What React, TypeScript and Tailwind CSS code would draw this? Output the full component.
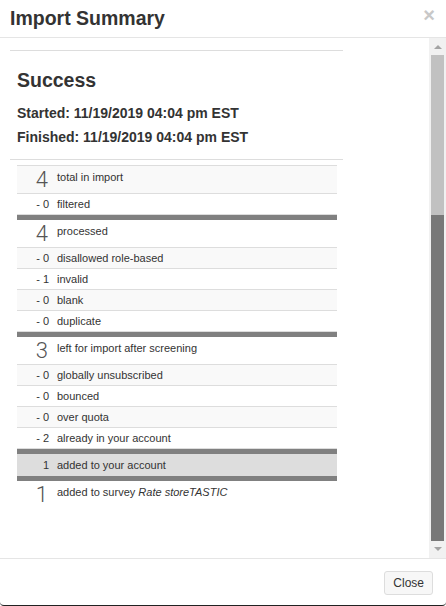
import React from 'react';

type Row =
  | { kind: 'big'; n: string; label: React.ReactNode; bg?: string; last?: boolean }
  | { kind: 'small'; n: string; label: string; bg?: string; last?: boolean }
  | { kind: 'sep' };

const rows: Row[] = [
  { kind: 'big', n: '4', label: 'total in import', bg: 'bg-[#f9f9f9]' },
  { kind: 'small', n: '- 0', label: 'filtered' },
  { kind: 'sep' },
  { kind: 'big', n: '4', label: 'processed' },
  { kind: 'small', n: '- 0', label: 'disallowed role-based', bg: 'bg-[#f9f9f9]' },
  { kind: 'small', n: '- 1', label: 'invalid' },
  { kind: 'small', n: '- 0', label: 'blank', bg: 'bg-[#f9f9f9]' },
  { kind: 'small', n: '- 0', label: 'duplicate' },
  { kind: 'sep' },
  { kind: 'big', n: '3', label: 'left for import after screening' },
  { kind: 'small', n: '- 0', label: 'globally unsubscribed', bg: 'bg-[#f9f9f9]' },
  { kind: 'small', n: '- 0', label: 'bounced' },
  { kind: 'small', n: '- 0', label: 'over quota', bg: 'bg-[#f9f9f9]' },
  { kind: 'small', n: '- 2', label: 'already in your account' },
  { kind: 'sep' },
  { kind: 'small', n: '1', label: 'added to your account', bg: 'bg-[#dddddd]', last: true },
  { kind: 'sep' },
  {
    kind: 'big',
    n: '1',
    last: true,
    label: (
      <>
        added to survey <i>Rate storeTASTIC</i>
      </>
    ),
  },
];

function SummaryRow({ row }: { row: Row }) {
  if (row.kind === 'sep') {
    return <div className="h-[5px] bg-[#808080]" />;
  }
  if (row.kind === 'big') {
    return (
      <div
        className={`flex items-start h-[28px] ${row.last ? '' : 'border-b border-[#dddddd]'} ${row.bg ?? ''}`}
      >
        <div className="w-[32px] pr-[1px] text-right text-[22px] leading-[27px] font-light text-[#555] font-['Roboto',sans-serif]">
          {row.n}
        </div>
        <div className="pl-[8px] pt-[5px] text-[11px] leading-[13px] text-[#333]">{row.label}</div>
      </div>
    );
  }
  return (
    <div
      className={`flex items-center ${row.last ? 'h-[22px]' : 'h-[21px] border-b border-[#dddddd]'} ${row.bg ?? ''}`}
    >
      <div className="w-[32px] text-right text-[11px] leading-[13px] text-[#333] whitespace-pre">{row.n}</div>
      <div className="pl-[8px] text-[11px] leading-[13px] text-[#333]">{row.label}</div>
    </div>
  );
}

function Scrollbar() {
  return (
    <div className="w-[17px] bg-[#f1f1f1] flex flex-col">
      <div className="h-[17px] flex items-center justify-center">
        <svg width="8" height="5" viewBox="0 0 8 5">
          <path d="M0 5 L4 1 L8 5 Z" fill="#a3a3a3" />
        </svg>
      </div>
      <div className="flex-1 flex flex-col px-[2px]">
        <div className="h-[160px] bg-[#c1c1c1]" />
        <div className="flex-1 bg-[#787878]" />
      </div>
      <div className="h-[17px] flex items-center justify-center">
        <svg width="8" height="5" viewBox="0 0 8 5">
          <path d="M0 0 L8 0 L4 4 Z" fill="#a3a3a3" />
        </svg>
      </div>
    </div>
  );
}

export default function App() {
  return (
    <div className="w-[446px] h-[606px] bg-white flex flex-col font-['Liberation_Sans',Arial,sans-serif] text-[#333] border-b border-[#222] rounded-b-[4px] overflow-hidden">
      {/* header */}
      <div className="h-[38px] shrink-0 border-b border-[#e5e5e5] flex items-start justify-between">
        <h1 className="pl-[10px] pt-[7px] text-[19.5px] leading-[22px] font-bold text-[#333]">Import Summary</h1>
        <button className="pr-[11px] pt-[5px] text-[20px] leading-[20px] font-bold text-[#c8c8c8]">×</button>
      </div>

      {/* body */}
      <div className="h-[520px] shrink-0 flex">
        <div className="flex-1 overflow-hidden pl-[10px] pt-[12px]">
          <div className="w-[333px]">
            <div className="border-t border-[#dddddd]" />
            <div className="px-[7px]">
              <h2 className="mt-[18px] text-[19.5px] leading-[22px] font-bold">Success</h2>
              <div className="mt-[10px] text-[14px] leading-[24px] font-bold">
                <div>Started: 11/19/2019 04:04 pm EST</div>
                <div>Finished: 11/19/2019 04:04 pm EST</div>
              </div>
            </div>
            <div className="mt-[10px] border-t border-[#dddddd]" />
            <div className="mt-[5px] ml-[7px] w-[320px] border-t border-[#dddddd]">
              {rows.map((r, i) => (
                <SummaryRow key={i} row={r} />
              ))}
            </div>
          </div>
        </div>
        <Scrollbar />
      </div>

      {/* footer */}
      <div className="flex-1 border-t border-[#e5e5e5] flex justify-end items-start pt-[12px] pr-[13px]">
        <button className="h-[24px] px-[8px] text-[12px] leading-[22px] text-[#333] bg-[#f7f7f7] border border-[#dddddd] rounded-[3px]">
          Close
        </button>
      </div>
    </div>
  );
}
